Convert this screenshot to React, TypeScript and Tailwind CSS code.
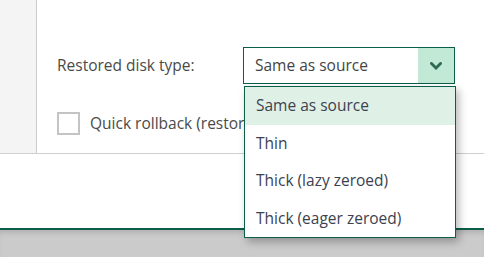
import { useState } from 'react'

const options = ['Same as source', 'Thin', 'Thick (lazy zeroed)', 'Thick (eager zeroed)'];

function DiskTypeSelect() {
    const [value, setValue] = useState(options[0]);
    const [open, setOpen] = useState(true);

    return (
        <div className="relative w-[212px]">
            <button
                onClick={() => setOpen(!open)}
                className="flex h-[37px] w-full items-stretch border border-[#0b5e4a] bg-white text-left"
            >
                <span className="flex flex-1 items-center pl-[11px] text-[15.5px] text-[#444]">{value}</span>
                <span className="flex w-[36px] items-center justify-center bg-[#c2e8d6]">
                    <svg width="12" height="8" viewBox="0 0 12 8" fill="none">
                        <path d="M1.5 1.5 6 6l4.5-4.5" stroke="#2e6b55" strokeWidth="2.8" strokeLinecap="square" />
                    </svg>
                </span>
            </button>

            {open && (
                <ul className="absolute left-[1px] top-[39px] z-10 w-[212px] border border-[#0b5e4a] bg-white shadow-[3px_4px_8px_rgba(0,0,0,0.28)]">
                    {options.map((option) => (
                        <li
                            key={option}
                            onClick={() => {
                                setValue(option);
                                setOpen(false);
                            }}
                            className={`flex h-[37.5px] cursor-pointer items-center pl-[11px] text-[15.5px] text-[#3d4150] ${option === value ? 'bg-[#dff1e7]' : ''}`}
                        >
                            {option}
                        </li>
                    ))}
                </ul>
            )}
        </div>
    );
}

export default function App() {
    const [quickRollback, setQuickRollback] = useState(false);

    return (
        <div className="flex h-[257px] w-[484px] flex-col overflow-hidden bg-white font-['Open_Sans',sans-serif]">
            <div className="flex h-[154px] shrink-0 border-b border-[#cfcfcf]">
                <div className="w-[37px] shrink-0 border-r border-[#cccccc] bg-[#f4f4f4]"></div>
                <div className="flex flex-1 flex-col pl-[20px] pt-[47px]">
                    <div className="flex items-center">
                        <span className="w-[186px] text-[15.5px] text-[#4a4a4a]">Restored disk type:</span>
                        <DiskTypeSelect />
                    </div>
                    <label className="mt-[28px] flex items-center gap-[10px]">
                        <input
                            type="checkbox"
                            checked={quickRollback}
                            onChange={(e) => setQuickRollback(e.target.checked)}
                            className="h-[23px] w-[23px] appearance-none border-2 border-[#c4c4c4] bg-white"
                        />
                        <span className="text-[15.5px] text-[#4a4a4a]">Quick rollback (restore changed blocks only)</span>
                    </label>
                </div>
            </div>
            <div className="h-[74px] shrink-0"></div>
            <div className="h-[2px] shrink-0 bg-[#0b5e4a]"></div>
            <div className="flex-1 bg-[#cbcbcb] shadow-[inset_0_5px_5px_-2px_rgba(0,0,0,0.12)]"></div>
        </div>
    );
}
